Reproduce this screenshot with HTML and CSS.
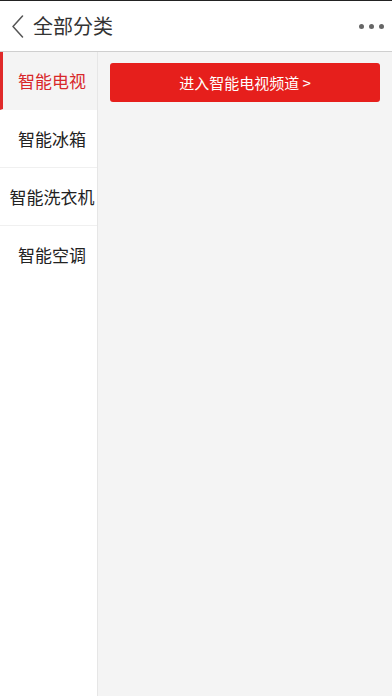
FILE: index.html
```html
<!DOCTYPE html>
<html>
<head>
<meta charset="utf-8">
<link rel="stylesheet" href="styles.css">
</head>
<body>
<div class="app">
  <header class="topbar">
    <div class="title-wrap">
      <svg class="back" width="13" height="24" viewBox="0 0 13 24"><path d="M11.5 2 L2 12.5 L11.5 23" fill="none" stroke="#555" stroke-width="1.5" stroke-linecap="round" stroke-linejoin="round"/></svg>
      <span class="title">全部分类</span>
    </div>
    <div class="more"><i></i><i></i><i></i></div>
  </header>
  <div class="body">
    <nav class="side">
      <div class="item active">智能电视</div>
      <div class="item">智能冰箱</div>
      <div class="item">智能洗衣机</div>
      <div class="item last">智能空调</div>
    </nav>
    <main class="content">
      <div class="btn">进入智能电视频道 &gt;</div>
    </main>
  </div>
</div>
</body>
</html>
```
FILE: styles.css
```css
html, body { margin: 0; padding: 0; }
body {
  font-family: "Noto Sans CJK SC", "Noto Sans", sans-serif;
  background: #fff;
  width: 392px;
  height: 696px;
  overflow: hidden;
}
.app { display: flex; flex-direction: column; height: 696px; border-top: 1px solid #222; box-sizing: border-box; }
.topbar {
  height: 50px;
  flex: none;
  display: flex;
  align-items: center;
  justify-content: space-between;
  border-bottom: 1px solid #cfcfcf;
  background: #fff;
}
.title-wrap { display: flex; align-items: center; padding-left: 11px; }
.back { margin-right: 9px; }
.title { font-size: 20px; color: #333; line-height: 26px; }
.more { display: flex; gap: 5px; padding-right: 8px; }
.more i { width: 5px; height: 5px; border-radius: 50%; background: #666; display: block; }
.body { flex: 1; display: flex; }
.side { width: 97px; border-right: 1px solid #e6e6e6; background: #fff; flex: none; }
.item {
  height: 57px;
  border-bottom: 1px solid #f0f0f0;
  display: flex;
  align-items: center;
  justify-content: center;
  font-size: 17px;
  color: #222;
  padding-left: 7px;
}
.item.last { border-bottom-color: transparent; }
.item.active {
  background: #f4f4f4;
  color: #d8282a;
  border-left: 3px solid #e02a2a;
  border-bottom-color: #f4f4f4;
  padding-left: 4px;
}
.content { flex: 1; background: #f4f4f4; padding: 11px 12px 0 12px; }
.btn {
  height: 39px;
  background: #e61f1c;
  border-radius: 3px;
  color: #fff;
  font-size: 15px;
  display: flex;
  align-items: center;
  justify-content: center;
}
```
